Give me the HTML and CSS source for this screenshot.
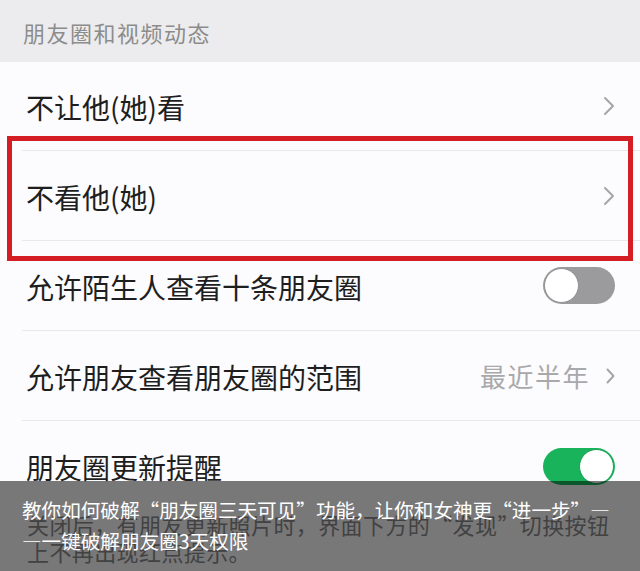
FILE: index.html
```html
<!DOCTYPE html>
<html lang="zh-CN">
<head>
    <meta charset="UTF-8">
    <title>朋友圈和视频动态</title>
    <link rel="stylesheet" href="styles.css">
</head>
<body>
    <div class="screen">
        <div class="section-title">朋友圈和视频动态</div>

        <div class="list">
            <div class="cell">
                <span class="cell-label">不让他(她)看</span>
                <svg class="chevron" width="12" height="20" viewBox="0 0 12 20"><polyline points="2,2 10,10 2,18"/></svg>
            </div>
            <div class="cell">
                <span class="cell-label">不看他(她)</span>
                <svg class="chevron" width="12" height="20" viewBox="0 0 12 20"><polyline points="2,2 10,10 2,18"/></svg>
            </div>
            <div class="cell">
                <span class="cell-label">允许陌生人查看十条朋友圈</span>
                <div class="switch"><div class="knob"></div></div>
            </div>
            <div class="cell">
                <span class="cell-label">允许朋友查看朋友圈的范围</span>
                <span class="cell-value">最近半年</span>
                <svg class="chevron small" width="9" height="16" viewBox="0 0 9 16"><polyline points="1.5,1.5 7.5,8 1.5,14.5"/></svg>
            </div>
            <div class="cell last">
                <span class="cell-label">朋友圈更新提醒</span>
                <div class="switch on"><div class="knob"></div></div>
            </div>
        </div>

        <p class="tip">关闭后，有朋友更新照片时，界面下方的“发现”切换按钮<br>上不再出现红点提示。</p>

        <!-- annotation around the second row -->
        <div class="mark"></div>

        <div class="caption">
            教你如何破解“朋友圈三天可见”功能，让你和女神更“进一步”—<br>—一键破解朋友圈3天权限
        </div>
    </div>
</body>
</html>
```

FILE: styles.css
```css
* {
    box-sizing: border-box;
}

body {
    margin: 0;
    font-family: "Noto Sans CJK SC", "Noto Sans", sans-serif;
    background-color: #fcfbfd;
}

.screen {
    position: relative;
    width: 640px;
    height: 571px;
    overflow: hidden;
    background-color: #fcfbfd;
}

.section-title {
    height: 62px;
    padding: 17px 0 0 23px;
    background-color: #ececee;
    color: #8c8c8c;
    font-size: 22px;
    letter-spacing: 1.5px;
    line-height: 30px;
}

.list {
    padding-left: 22px;
}

.cell {
    display: flex;
    align-items: center;
    height: 90px;
    padding: 0 25px 0 4px;
    border-bottom: 1px solid #e8e7ea;
}

.cell:first-child {
    height: 89px;
}

.cell.last {
    border-bottom: none;
}

.cell-label {
    flex: 1;
    color: #1e1e1e;
    font-size: 28px;
    line-height: 36px;
    padding-top: 2px;
}

.cell-value {
    color: #a9a9ab;
    font-size: 26px;
    letter-spacing: 1.5px;
    margin-right: 16px;
}

.chevron {
    display: block;
    fill: none;
    stroke: #a5a5a7;
    stroke-width: 2;
    stroke-linecap: round;
    stroke-linejoin: round;
}

.switch {
    position: relative;
    width: 72px;
    height: 37px;
    border-radius: 19px;
    background-color: #9b9b9d;
}

.knob {
    position: absolute;
    top: 1px;
    left: 1px;
    width: 35px;
    height: 35px;
    border-radius: 50%;
    background-color: #ffffff;
    border: 1px solid #8e8e90;
}

.switch.on {
    background-color: #18b35b;
}

.switch.on .knob {
    left: auto;
    right: 1px;
    border-color: #15a052;
}

.tip {
    margin: 0;
    padding: 0 0 0 27px;
    color: #8a8a8a;
    font-size: 22px;
    letter-spacing: 0.4px;
    line-height: 27px;
}

.mark {
    position: absolute;
    left: 7px;
    top: 136px;
    width: 626px;
    height: 125px;
    border: 5px solid #d41e23;
}

.caption {
    position: absolute;
    left: 0;
    right: 0;
    top: 481px;
    bottom: 0;
    padding: 13px 0 0 22px;
    background-color: rgba(0, 0, 0, 0.52);
    color: #ffffff;
    font-size: 19.6px;
    line-height: 31px;
    white-space: nowrap;
}
```
